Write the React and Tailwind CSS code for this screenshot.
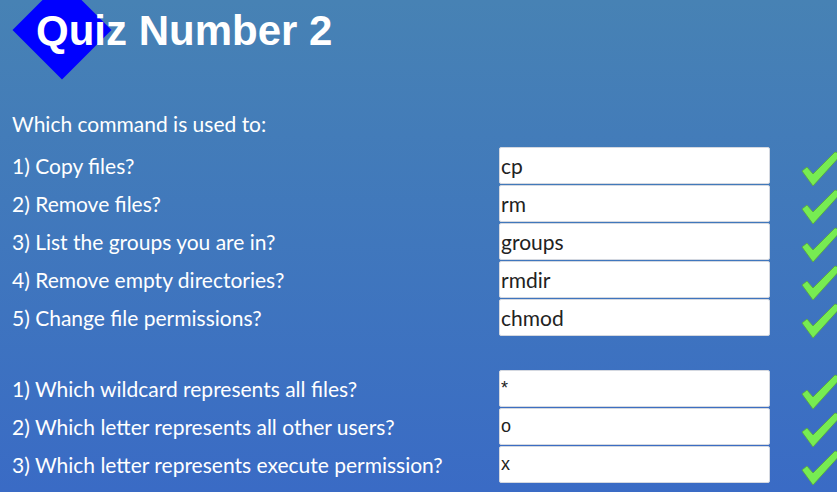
import React from "react";

const group1 = [
  ["1) Copy files?", "cp"],
  ["2) Remove files?", "rm"],
  ["3) List the groups you are in?", "groups"],
  ["4) Remove empty directories?", "rmdir"],
  ["5) Change file permissions?", "chmod"],
];
const group2 = [
  ["1) Which wildcard represents all files?", "*"],
  ["2) Which letter represents all other users?", "o"],
  ["3) Which letter represents execute permission?", "x"],
];

function Check() {
  return (
    <svg width="42" height="36" viewBox="0 0 42 36" className="block">
      <polygon
        points="2,20 7,16 13,23 35,1 42,3 13,35"
        fill="#77ec52"
        stroke="#5aa83a"
        strokeWidth="0.8"
        strokeLinejoin="round"
      />
    </svg>
  );
}

function Row({ label, value, lato }) {
  return (
    <div className="flex h-[38px] items-center">
      <div className="w-[487px] shrink-0 pt-[2px] font-['Lato',sans-serif] text-[21px] text-white">
        {label}
      </div>
      <input
        readOnly
        defaultValue={value}
        className={
          "h-[37px] w-[271px] shrink-0 rounded-[2px] border border-[#d4d8e0] bg-white pl-[1px] text-[#222] outline-none " +
          (lato ? "font-['Lato',sans-serif] text-[21px]" : "font-['Liberation_Sans',Arial,sans-serif] text-[18px]")
        }
      />
      <div className="ml-[30px] mt-[8px] shrink-0">
        <Check />
      </div>
    </div>
  );
}

export default function App() {
  return (
    <div className="relative h-[492px] w-[837px] overflow-hidden bg-gradient-to-b from-[#4782b4] to-[#3a6bc5]">
      <div className="absolute left-[27px] top-[-5px] h-[70px] w-[70px] rotate-45 bg-[#0000ff]" />
      <h1 className="relative pl-[36px] pt-[7px] font-['Liberation_Sans',Arial,sans-serif] text-[42px] font-bold leading-[48px] text-white">
        Quiz Number 2
      </h1>
      <div className="pl-3">
        <p className="mt-[57px] h-[34px] font-['Lato',sans-serif] text-[21px] leading-[24px] text-white">
          Which command is used to:
        </p>
        <div className="mt-0">
          {group1.map(([l, v]) => (
            <Row key={l} label={l} value={v} lato />
          ))}
        </div>
        <div className="mt-[33px]">
          {group2.map(([l, v]) => (
            <Row key={l} label={l} value={v} lato={false} />
          ))}
        </div>
      </div>
    </div>
  );
}
